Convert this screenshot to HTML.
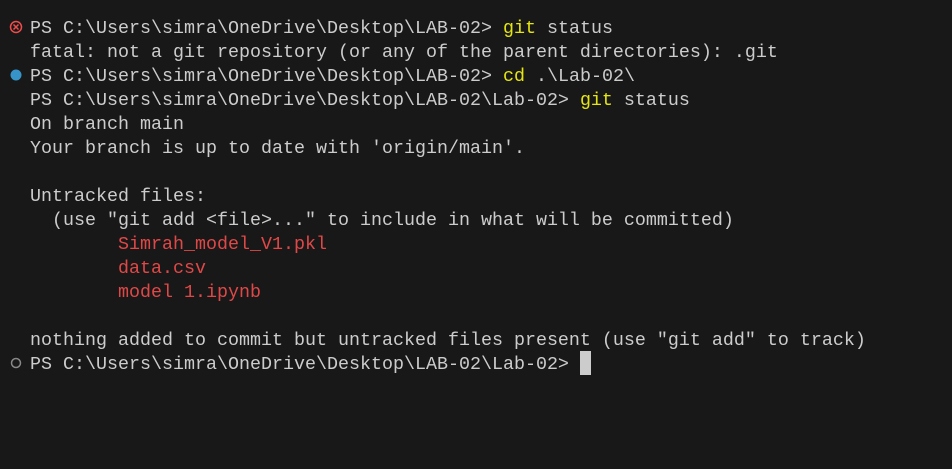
<!DOCTYPE html>
<html><head><style>
html,body{margin:0;padding:0;background:#181818;width:952px;height:469px;overflow:hidden}
.t{position:absolute;left:30px;top:17px;font-family:"Liberation Mono",monospace;font-size:18.33px;line-height:24px;color:#cccccc;white-space:pre}
.y{color:#e5e510}.r{color:#e04848}
.ic{position:absolute;left:0;top:0}
.cur{position:absolute;left:580px;top:351px;width:11px;height:24px;background:#cccccc}
</style></head><body>
<svg class="ic" width="30" height="469">
<circle cx="16" cy="27" r="5.5" fill="none" stroke="#f14c4c" stroke-width="1.5"/>
<path d="M13.5 24.5L18.5 29.5M18.5 24.5L13.5 29.5" stroke="#f14c4c" stroke-width="1.5"/>
<circle cx="16" cy="75" r="5.5" fill="#3794c8"/>
<circle cx="16" cy="363" r="4.5" fill="none" stroke="#888" stroke-width="1.5"/>
</svg>
<div class="t">PS C:\Users\simra\OneDrive\Desktop\LAB-02> <span class="y">git</span> status
fatal: not a git repository (or any of the parent directories): .git
PS C:\Users\simra\OneDrive\Desktop\LAB-02> <span class="y">cd</span> .\Lab-02\
PS C:\Users\simra\OneDrive\Desktop\LAB-02\Lab-02> <span class="y">git</span> status
On branch main
Your branch is up to date with 'origin/main'.

Untracked files:
  (use "git add &lt;file&gt;..." to include in what will be committed)
<span class="r">        Simrah_model_V1.pkl</span>
<span class="r">        data.csv</span>
<span class="r">        model 1.ipynb</span>

nothing added to commit but untracked files present (use "git add" to track)
PS C:\Users\simra\OneDrive\Desktop\LAB-02\Lab-02> </div>
<div class="cur"></div>
</body></html>
